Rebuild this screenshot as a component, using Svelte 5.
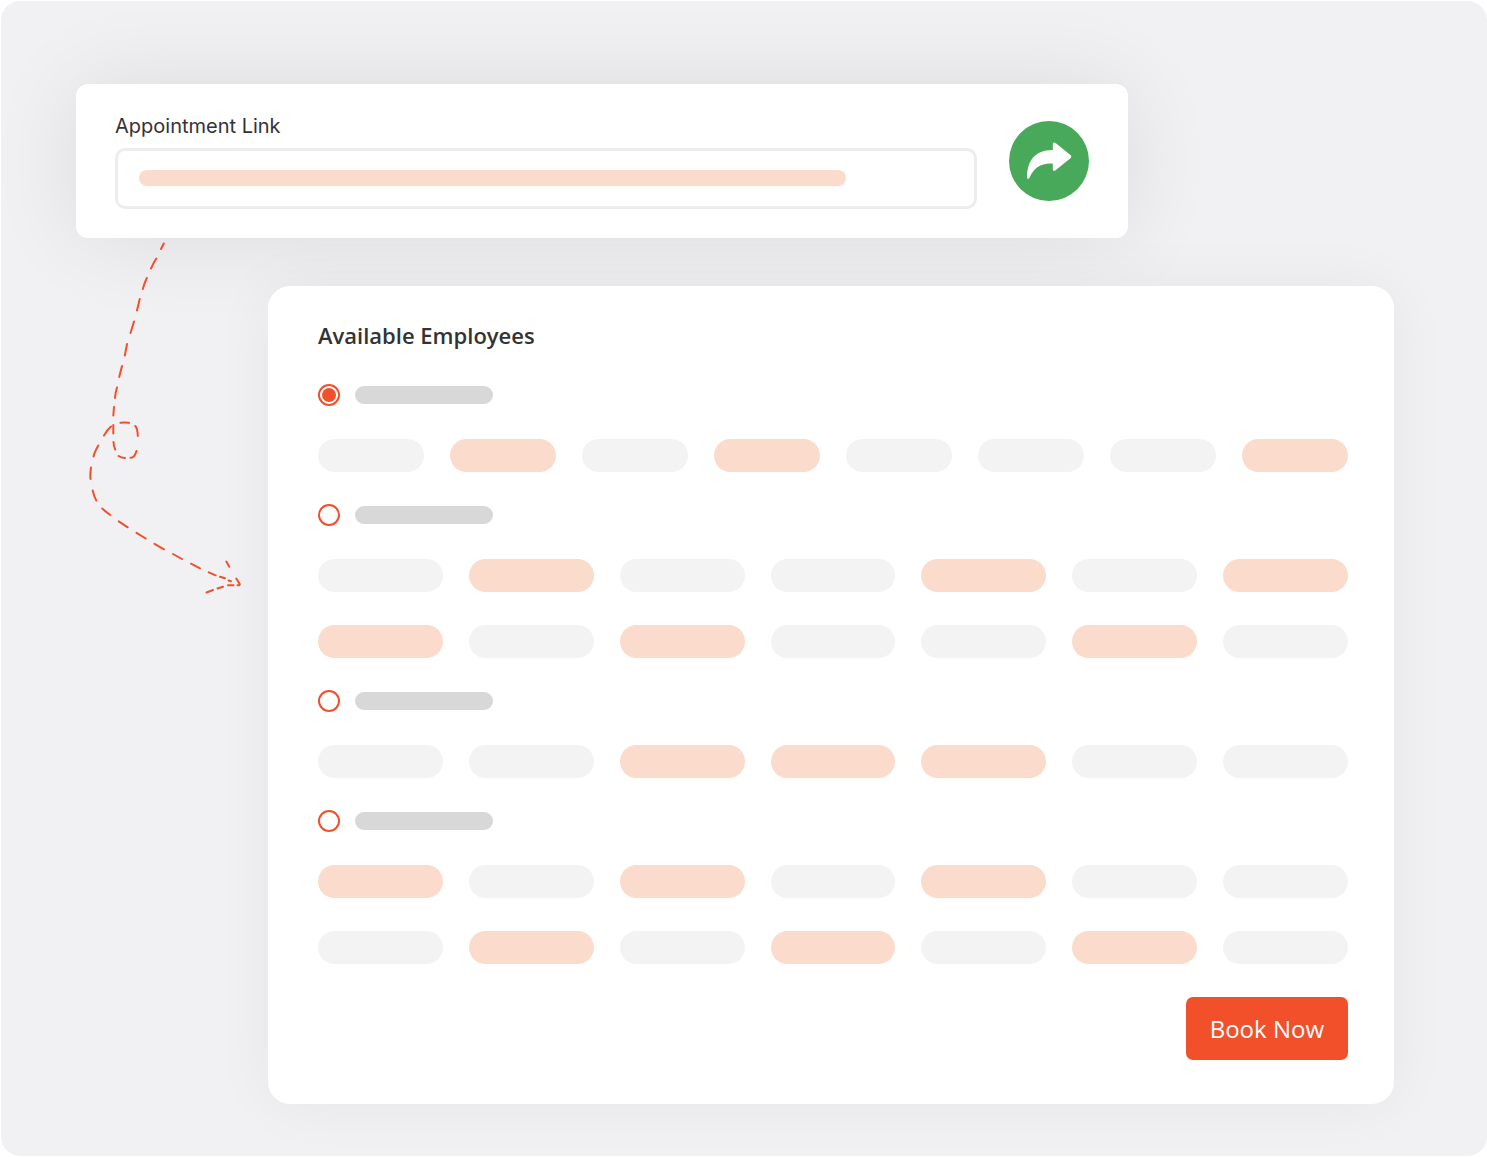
<script>
  const employees = [
    { id: 1, rows: ['01010001'] },
    { id: 2, rows: ['0100101', '1010010'] },
    { id: 3, rows: ['0011100'] },
    { id: 4, rows: ['1010100', '0101010'] }
  ];
  let selected = $state(1);
  let link = $state('');
</script>

<main class="scene">
  <section class="card link-card">
    <div class="field">
      <label for="link">Appointment Link</label>
      <div class="input-wrap">
        <input id="link" type="text" bind:value={link} />
        {#if !link}<span class="link-bar"></span>{/if}
      </div>
    </div>
    <button class="share" type="button" aria-label="Share">
      <svg viewBox="0 0 80 80" width="80" height="80" aria-hidden="true">
        <path
          d="M43.8 23.2C43.8 21.6 45.2 21 46.6 22.1L61.4 34.1C62.6 35.1 62.6 36.2 61.4 37.2L46.6 49.2C45.2 50.3 43.8 49.7 43.8 48.2V42.7C32.5 41.8 25 46.5 20.6 56.6C20 58.3 18 58.2 18 56.2C18.2 41 24.5 29 43.8 28.9Z"
          fill="#fff"
        />
      </svg>
    </button>
  </section>

  <form class="card employees" onsubmit={(e) => e.preventDefault()}>
    <h2>Available Employees</h2>
    <div class="groups">
      {#each employees as employee (employee.id)}
        <div class="group">
          <label class="choice">
            <input
              type="radio"
              name="employee"
              value={employee.id}
              bind:group={selected}
              aria-label={`Employee ${employee.id}`}
            />
            <span class="name-bar"></span>
          </label>
          {#each employee.rows as row}
            <div class="slots">
              {#each row as slot}
                <span class="slot" class:open={slot === '1'}></span>
              {/each}
            </div>
          {/each}
        </div>
      {/each}
    </div>
    <button class="book" type="submit">Book Now</button>
  </form>

  <svg class="trail" viewBox="80 235 180 370" width="180" height="370" aria-hidden="true">
    <g fill="none" stroke="#f1502b" stroke-width="2" stroke-linecap="round">
      <path d="M163.8 243.5L161 249M156.3 258.5Q153 263.8 151 268.5M146.8 278Q144 284 142.8 289M139.7 299L137 310.5M134 321.5L130.5 333M127 344L124.8 355.5M122 366L119.2 377M117 387.5Q115.3 393 115 398M114 407L113.3 415.5M113.3 425V433.5M113.5 442Q113.6 446.5 115.2 449.5" />
      <path d="M118.5 456Q121 457.7 125 458M130.5 457.8Q134.5 458 136.5 451M137.8 436Q137.6 428.5 135.3 426M129 422.8Q124 422.3 120.5 422.8M111 426.5Q107 430 104 435.5M98.3 445.5Q94.5 452 93.5 456.5M91 467.5Q90 474 90.5 479M92.7 490.5Q94 496.5 96.3 500.5M102.3 508.5Q106 512 110.3 515" />
      <path d="M118.7 521.3L127.7 527.3M136.5 532.8L145.7 538.5M154.5 543.8L164 549.3M173 554L182 559M191 563.7L200 568.3M208.7 572.3L215.7 575.3M220 576.8L225 578.3M228.5 580.5L231 581.2" />
      <path d="M226.3 561.5L229.3 566.7M236.3 578.5L239.8 584.3Q239.5 585.7 237.5 585.2M233.5 585.3H228M223 586.8L217.5 588.5M213 590L206.5 592.5" />
    </g>
  </svg>
</main>

<style>
  :global(body) {
    margin: 0;
    background: #fff;
  }

  .scene {
    position: relative;
    box-sizing: border-box;
    min-height: 100vh;
    padding: 83px 93px 52px 75px;
    border: solid #fff;
    border-width: 1px 0 1px 1px;
    border-radius: 20px;
    background: #f1f1f4;
    color: #333;
    display: flex;
    flex-direction: column;
    gap: 48px;
    overflow: hidden;
  }

  .card {
    box-sizing: border-box;
    background: #fff;
  }

  .link-card {
    margin-right: 266px;
    padding: 29px 39px;
    border-radius: 12px;
    box-shadow: 0 0 90px rgba(0, 0, 0, 0.09);
    display: flex;
    align-items: center;
    gap: 32px;
  }

  .field {
    flex: 1;
    min-width: 0;
  }

  .field label {
    display: block;
    margin-bottom: 9px;
    font: 400 20px/26px Inter, sans-serif;
  }

  .input-wrap {
    display: grid;
    align-items: start;
  }

  .input-wrap > * {
    grid-area: 1 / 1;
  }

  .input-wrap input {
    box-sizing: border-box;
    width: 100%;
    height: 61px;
    padding: 0 24px;
    border: 3px solid #ededed;
    border-radius: 10px;
    background: #fff;
    font: 400 20px/28px Inter, sans-serif;
    color: #333;
  }

  .link-bar {
    width: 82%;
    height: 16px;
    margin: 22px 0 0 24px;
    border-radius: 8px;
    background: #fbdbcb;
    pointer-events: none;
  }

  .share {
    width: 80px;
    height: 80px;
    padding: 0;
    border: 0;
    border-radius: 50%;
    background: #49a95a;
    cursor: pointer;
  }

  .share svg {
    display: block;
  }

  .employees {
    margin-left: 192px;
    padding: 33px 46px 44px 50px;
    border-radius: 22px;
    box-shadow: 0 0 60px rgba(0, 0, 0, 0.05);
    display: flex;
    flex-direction: column;
  }

  h2 {
    margin: 0 0 33px;
    font: 600 22px/32px 'Open Sans', sans-serif;
  }

  .groups {
    display: flex;
    flex-direction: column;
    gap: 32px;
  }

  .group {
    display: flex;
    flex-direction: column;
    gap: 33px;
  }

  .choice {
    display: flex;
    align-items: center;
    gap: 15px;
    height: 22px;
  }

  .choice input {
    appearance: none;
    box-sizing: border-box;
    width: 22px;
    height: 22px;
    margin: 0;
    border: 2px solid #f1502b;
    border-radius: 50%;
    background: #fff;
  }

  .choice input:checked {
    padding: 2px;
    background: #f1502b content-box;
  }

  .name-bar {
    width: 138px;
    height: 18px;
    border-radius: 9px;
    background: #d8d8d8;
  }

  .slots {
    display: flex;
    gap: 26px;
  }

  .slot {
    flex: 1;
    height: 33px;
    border-radius: 17px;
    background: #f3f3f3;
  }

  .slot.open {
    background: #fbdbcb;
  }

  .book {
    align-self: flex-end;
    margin-top: 33px;
    padding: 15px 24px;
    border: 0;
    border-radius: 7px;
    background: #f1502b;
    color: #fff;
    font: 400 24px/33px 'Open Sans', sans-serif;
    cursor: pointer;
  }

  .trail {
    position: absolute;
    left: 79px;
    top: 234px;
  }
</style>
